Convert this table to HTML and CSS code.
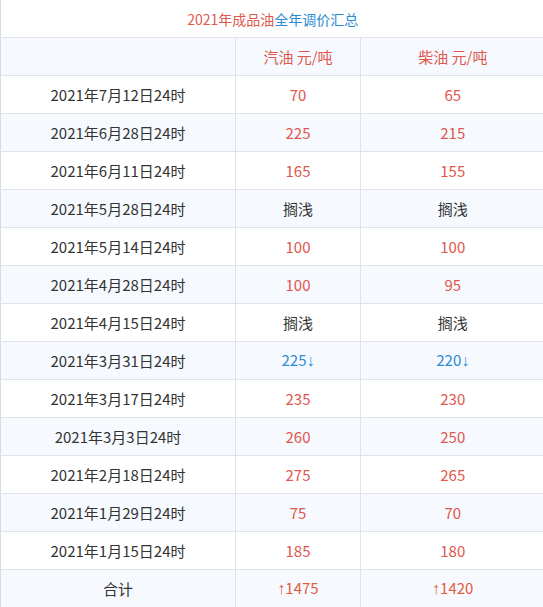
FILE: index.html
```html
<!DOCTYPE html>
<html lang="zh-CN">
<head>
<meta charset="utf-8">
<title>2021年成品油全年调价汇总</title>
<link rel="stylesheet" href="styles.css">
</head>
<body>
<table class="tbl">
  <colgroup><col class="c1"><col class="c2"><col class="c3"></colgroup>
  <tr class="title-row"><td colspan="3" class="title"><span class="red">2021年成品油</span><span class="blue">全年调价汇总</span></td></tr>
  <tr class="alt"><td></td><td class="red">汽油 元/吨</td><td class="red">柴油 元/吨</td></tr>
  <tr><td>2021年7月12日24时</td><td class="red">70</td><td class="red">65</td></tr>
  <tr class="alt"><td>2021年6月28日24时</td><td class="red">225</td><td class="red">215</td></tr>
  <tr><td>2021年6月11日24时</td><td class="red">165</td><td class="red">155</td></tr>
  <tr class="alt"><td>2021年5月28日24时</td><td>搁浅</td><td>搁浅</td></tr>
  <tr><td>2021年5月14日24时</td><td class="red">100</td><td class="red">100</td></tr>
  <tr class="alt"><td>2021年4月28日24时</td><td class="red">100</td><td class="red">95</td></tr>
  <tr><td>2021年4月15日24时</td><td>搁浅</td><td>搁浅</td></tr>
  <tr class="alt"><td>2021年3月31日24时</td><td class="blue">225<span class="arrow">↓</span></td><td class="blue">220<span class="arrow">↓</span></td></tr>
  <tr><td>2021年3月17日24时</td><td class="red">235</td><td class="red">230</td></tr>
  <tr class="alt"><td>2021年3月3日24时</td><td class="red">260</td><td class="red">250</td></tr>
  <tr><td>2021年2月18日24时</td><td class="red">275</td><td class="red">265</td></tr>
  <tr class="alt"><td>2021年1月29日24时</td><td class="red">75</td><td class="red">70</td></tr>
  <tr><td>2021年1月15日24时</td><td class="red">185</td><td class="red">180</td></tr>
  <tr class="alt"><td>合计</td><td class="sum"><span class="arrow">↑</span>1475</td><td class="sum"><span class="arrow">↑</span>1420</td></tr>
</table>
</body>
</html>
```
FILE: styles.css
```css
html, body {
  margin: 0;
  padding: 0;
  background: #ffffff;
  overflow: hidden;
}
.tbl {
  width: 544px;
  border-collapse: collapse;
  table-layout: fixed;
  font-family: "Noto Sans CJK SC", "Noto Sans", sans-serif;
  font-size: 15px;
  color: #333333;
  border-left: 1px solid #d6dbe1;
}
.c1 { width: 235px; }
.c2 { width: 125px; }
.c3 { width: 184px; }
.tbl td {
  height: 37px;
  padding: 0;
  text-align: center;
  vertical-align: middle;
  border-top: 1px solid #dfe3e8;
  border-left: 1px solid #dfe3e8;
  line-height: 20px;
}
.tbl td:first-child {
  border-left: none;
}
.tbl .title-row td {
  border-top: none;
  height: 37px;
  font-size: 14px;
}
.tbl tr.alt td {
  background: #f6faff;
}
.arrow {
  font-family: "Liberation Sans", sans-serif;
  font-size: 16px;
}
.red { color: #e0574d; }
.blue { color: #2a8bd3; }
.sum { color: #e35a3f; }
```
